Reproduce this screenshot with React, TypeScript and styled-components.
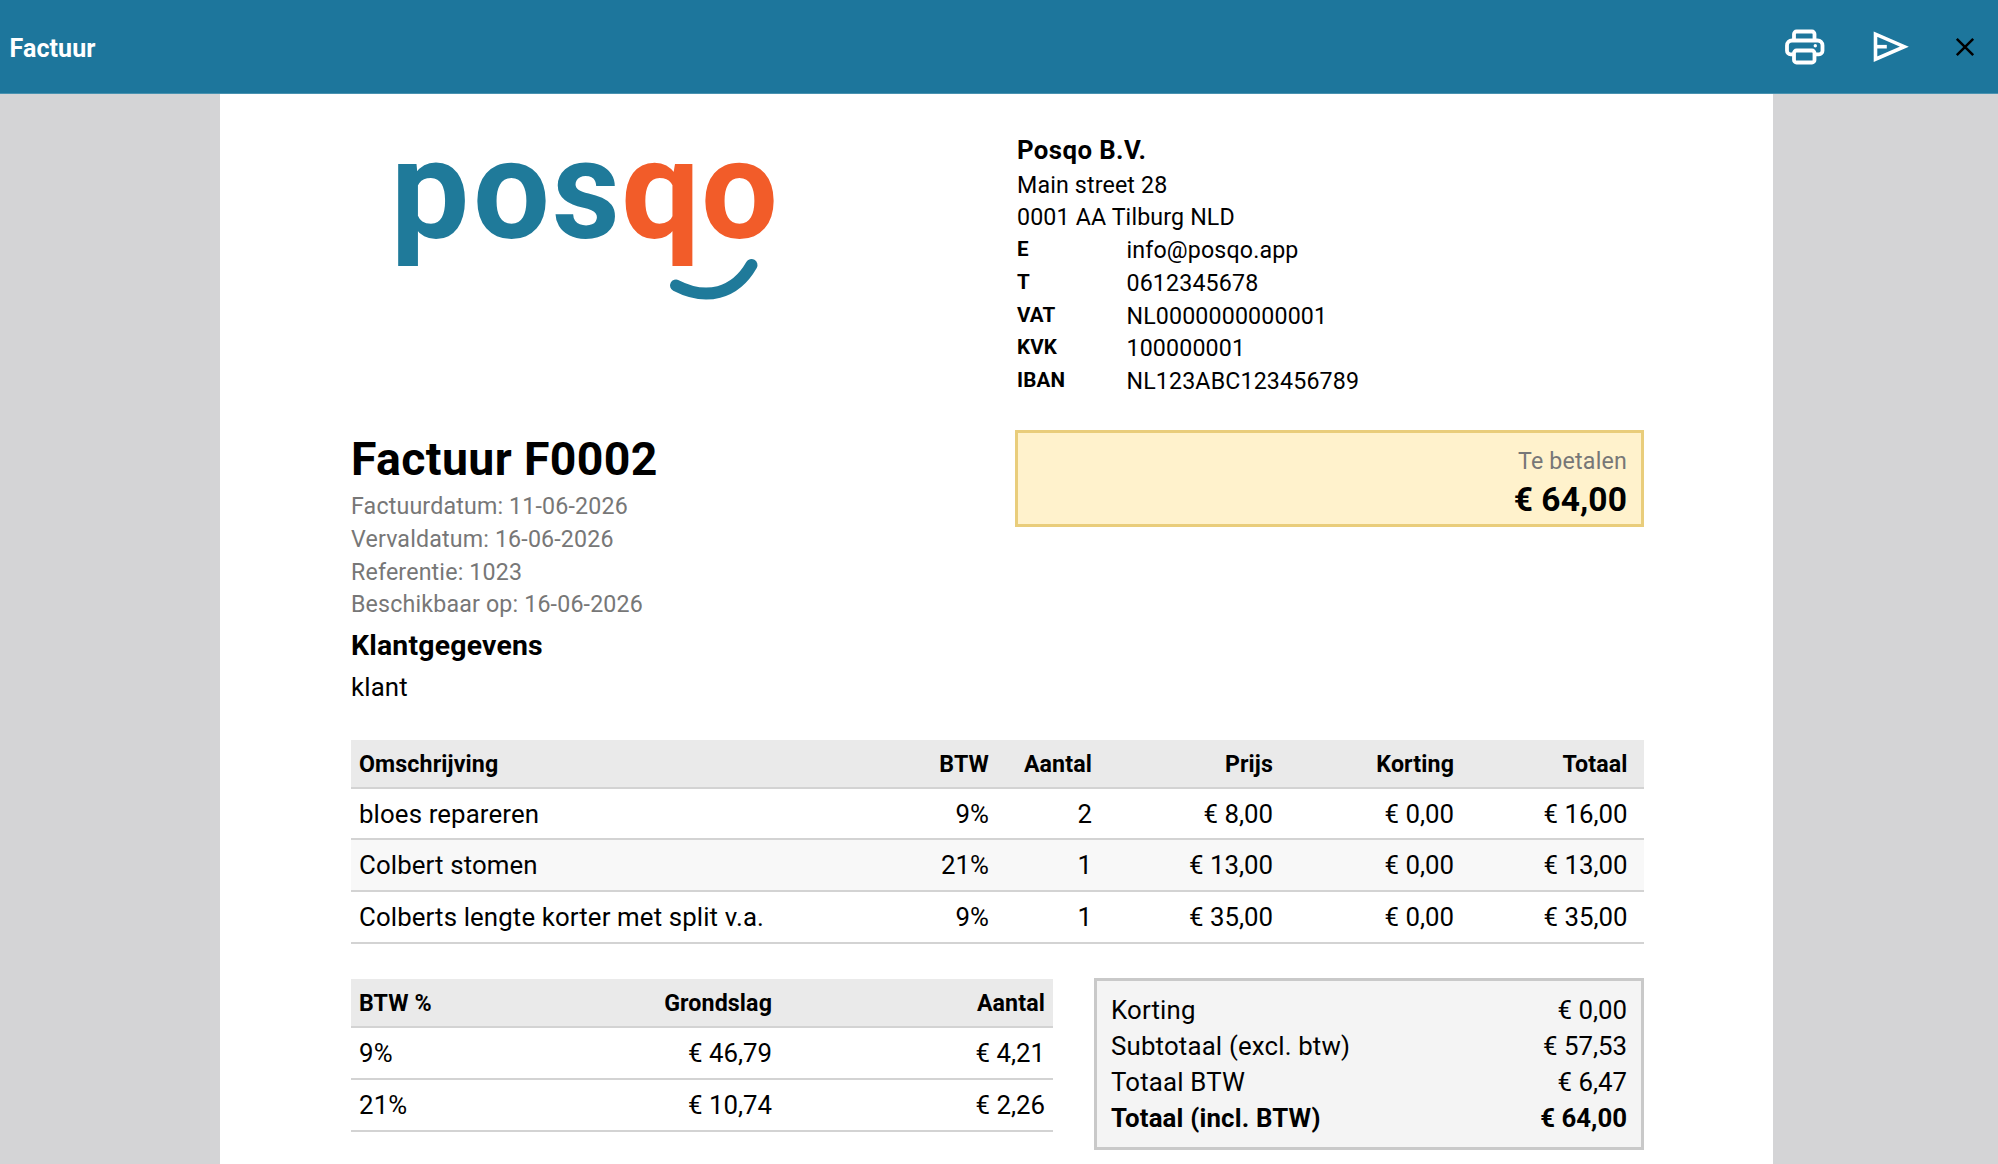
import React from "react";
import styled, { createGlobalStyle } from "styled-components";

const Global = createGlobalStyle`
  * { box-sizing: border-box; }
  html, body { margin: 0; padding: 0; height: 100%; overflow: hidden; }
  body { background: #d4d4d6; color: #000; font-family: Roboto, "Liberation Sans", sans-serif; }
`;

const Screen = styled.div`
  width: 1998px;
  height: 1164px;
  display: flex;
  flex-direction: column;
  align-items: stretch;
  overflow: hidden;
`;

const TopBar = styled.header`
  flex: none;
  height: 94px;
  display: flex;
  align-items: center;
  justify-content: space-between;
  padding: 0 19px 0 9.5px;
  background: #1d769c;
  border-bottom: 1px solid #4992b0;
`;

const Title = styled.h1`
  margin: 5px 0 0;
  color: #fff;
  font-size: 25px;
  line-height: 32px;
  font-weight: 700;
  letter-spacing: 0.1px;
`;

const Actions = styled.div`
  display: flex;
  align-items: center;
  gap: 36px;
`;

const IconButton = styled.button`
  display: flex;
  padding: 0;
  border: 0;
  background: none;
`;

const Page = styled.main`
  flex: 1;
  width: 1553px;
  margin-left: 220px;
  padding: 0 129px 0 131px;
  background: #fff;
`;

const Columns = styled.div<{ $height: number }>`
  display: grid;
  grid-template-columns: 664px 1fr;
  height: ${(p) => p.$height}px;
`;

const LogoBox = styled.div`
  padding: 6px 0 0 37px;
`;

const Company = styled.div`
  padding: 39px 0 0 2px;
  font-size: 23.2px;
  line-height: 32.8px;
  letter-spacing: 0.15px;
`;

const CompanyName = styled.div`
  font-size: 25.8px;
  font-weight: 700;
  line-height: 34.5px;
  letter-spacing: 0.4px;
  padding-bottom: 1px;
`;

const Contact = styled.div`
  display: grid;
  grid-template-columns: 109.5px 1fr;
`;

const ContactLabel = styled.span`
  font-size: 20.6px;
  font-weight: 700;
  line-height: 31px;
`;

const InvoiceTitle = styled.h2`
  margin: 0 0 2px;
  font-size: 46.4px;
  font-weight: 700;
  line-height: 58px;
  letter-spacing: 0.38px;
`;

const Meta = styled.div`
  color: #777;
  font-size: 23.2px;
  line-height: 32.75px;
  letter-spacing: 0.17px;
`;

const CustomerTitle = styled.h3`
  margin: 5px 0 0;
  font-size: 28.4px;
  font-weight: 700;
  line-height: 40px;
  letter-spacing: 0.2px;
`;

const Customer = styled.div`
  font-size: 25.8px;
  line-height: 42px;
  letter-spacing: 0.15px;
`;

const DueBox = styled.div`
  height: 97px;
  padding: 12px 14px 0 0;
  border: 3px solid #e9cd7b;
  background: #fff2cc;
  text-align: right;
`;

const DueLabel = styled.div`
  color: #777;
  font-size: 23.2px;
  line-height: 33px;
  letter-spacing: 0.2px;
`;

const DueAmount = styled.div`
  font-size: 33.5px;
  font-weight: 700;
  line-height: 44px;
  letter-spacing: 0.1px;
`;

const Table = styled.div<{ $cols: string; $top?: number }>`
  display: grid;
  grid-template-columns: ${(p) => p.$cols};
  margin-top: ${(p) => p.$top ?? 0}px;
`;

const HeadCell = styled.div<{ $left?: boolean; $wide?: boolean }>`
  height: 49px;
  padding: 0 ${(p) => (p.$wide ? 16.5 : 8)}px 0 8px;
  background: #eaeaea;
  border-bottom: 2px solid #d3d3d3;
  font-size: 23.2px;
  font-weight: 700;
  line-height: 48px;
  letter-spacing: 0.12px;
  text-align: ${(p) => (p.$left ? "left" : "right")};
`;

const Cell = styled.div<{ $left?: boolean; $wide?: boolean; $striped?: boolean; $height: number }>`
  height: ${(p) => p.$height}px;
  padding: 0 ${(p) => (p.$wide ? 16.5 : 8)}px 0 8px;
  background: ${(p) => (p.$striped ? "#f8f8f8" : "#fff")};
  border-bottom: 2px solid #d3d3d3;
  font-size: 25.8px;
  line-height: 50px;
  letter-spacing: ${(p) => (p.$left ? "0.13px" : "0")};
  text-align: ${(p) => (p.$left ? "left" : "right")};
  white-space: nowrap;
`;

const Summary = styled.div`
  display: grid;
  grid-template-columns: 702px 550px;
  justify-content: space-between;
  align-items: start;
  margin-top: 34px;
`;

const Totals = styled.div`
  height: 172px;
  padding: 12px 14px 0 14px;
  border: 3px solid #c9c9c9;
  background: #f4f4f4;
`;

const TotalRow = styled.div<{ $bold?: boolean }>`
  display: flex;
  justify-content: space-between;
  font-size: 25.8px;
  line-height: 35.9px;
  font-weight: ${(p) => (p.$bold ? 700 : 400)};
`;

const TotalLabel = styled.span`
  letter-spacing: 0.18px;
`;

const contacts = [
  ["E", "info@posqo.app"],
  ["T", "0612345678"],
  ["VAT", "NL0000000000001"],
  ["KVK", "100000001"],
  ["IBAN", "NL123ABC123456789"],
];

const meta = [
  "Factuurdatum: 11-06-2026",
  "Vervaldatum: 16-06-2026",
  "Referentie: 1023",
  "Beschikbaar op: 16-06-2026",
];

const lineHead = ["Omschrijving", "BTW", "Aantal", "Prijs", "Korting", "Totaal"];
const lines = [
  ["bloes repareren", "9%", "2", "€ 8,00", "€ 0,00", "€ 16,00"],
  ["Colbert stomen", "21%", "1", "€ 13,00", "€ 0,00", "€ 13,00"],
  ["Colberts lengte korter met split v.a.", "9%", "1", "€ 35,00", "€ 0,00", "€ 35,00"],
];
const lineHeights = [51, 52, 52];

const vatHead = ["BTW %", "Grondslag", "Aantal"];
const vat = [
  ["9%", "€ 46,79", "€ 4,21"],
  ["21%", "€ 10,74", "€ 2,26"],
];

const totals = [
  ["Korting", "€ 0,00"],
  ["Subtotaal (excl. btw)", "€ 57,53"],
  ["Totaal BTW", "€ 6,47"],
  ["Totaal (incl. BTW)", "€ 64,00"],
];

const PrintIcon = () => (
  <svg width="50" height="50" viewBox="0 1 50 50" fill="none" stroke="#fff" strokeWidth="3.8" strokeLinejoin="round">
    <path d="M15 18.500V13a2.500 2.500 0 0 1 2.500-2.500H33a2.500 2.500 0 0 1 2.500 2.500V18.500" />
    <path d="M15 33.300H11.500a3.500 3.500 0 0 1-3.500-3.500V24.500a5 5 0 0 1 5-5H38.500a5 5 0 0 1 5 5V29.800a3.500 3.500 0 0 1-3.500 3.500H35.500" />
    <rect x="15" y="29.500" width="20.500" height="12" rx="2.500" />
    <circle cx="36.300" cy="24.800" r="1.700" fill="#fff" stroke="none" />
  </svg>
);

const SendIcon = () => (
  <svg width="50" height="50" viewBox="0.7 0.3 50 50" fill="none" stroke="#fff" strokeWidth="3.6">
    <path d="M11.200 12.500V37.500L40 25Z" />
    <path d="M11.200 25H22.500" />
  </svg>
);

const CloseIcon = () => (
  <svg width="28" height="28" viewBox="0 0 28 28" fill="none" stroke="#000" strokeWidth="2.500">
    <path d="M5.800 5.800L22.200 22.200M22.200 5.800L5.800 22.200" />
  </svg>
);

const LogoText = styled.text`
  font-family: Roboto, "Liberation Sans", sans-serif;
  font-size: 139px;
  font-weight: 700;
`;

/* letter, left offset, horizontal stretch, colour */
const mark: [string, number, number, string][] = [
  ["p", 2.5, 1.01, "#1f7a9a"],
  ["o", 85, 0.98, "#1f7a9a"],
  ["s", 164, 0.95, "#1f7a9a"],
  ["q", 233, 1.01, "#f25c29"],
  ["o", 313, 0.98, "#f25c29"],
];

const Logo = () => (
  <svg width="400" height="220" viewBox="0 -50 400 220">
    {mark.map(([letter, x, stretch, color]) => (
      <LogoText key={x} fill={color} transform={`translate(${x} 88) scale(${stretch} 1)`}>
        {letter}
      </LogoText>
    ))}
    <path d="M288 135.500C318 151 347 144 363.500 115" fill="none" stroke="#1f7a9a" strokeWidth="12" strokeLinecap="round" />
  </svg>
);

export default function App() {
  return (
    <Screen>
      <Global />
      <TopBar>
        <Title>Factuur</Title>
        <Actions>
          <IconButton aria-label="Print"><PrintIcon /></IconButton>
          <IconButton aria-label="Send"><SendIcon /></IconButton>
          <IconButton aria-label="Close"><CloseIcon /></IconButton>
        </Actions>
      </TopBar>
      <Page>
        <Columns $height={336}>
          <LogoBox><Logo /></LogoBox>
          <Company>
            <CompanyName>Posqo B.V.</CompanyName>
            <div>Main street 28</div>
            <div>0001 AA Tilburg NLD</div>
            {contacts.map(([label, value]) => (
              <Contact key={label}>
                <ContactLabel>{label}</ContactLabel>
                <span>{value}</span>
              </Contact>
            ))}
          </Company>
        </Columns>
        <Columns $height={310}>
          <div>
            <InvoiceTitle>Factuur F0002</InvoiceTitle>
            {meta.map((m) => <Meta key={m}>{m}</Meta>)}
            <CustomerTitle>Klantgegevens</CustomerTitle>
            <Customer>klant</Customer>
          </div>
          <DueBox>
            <DueLabel>Te betalen</DueLabel>
            <DueAmount>€ 64,00</DueAmount>
          </DueBox>
        </Columns>
        <Table $cols="1fr 103px 103px 181px 181px 182px">
          {lineHead.map((h, i) => (
            <HeadCell key={h} $left={i === 0} $wide={i === 5}>{h}</HeadCell>
          ))}
          {lines.map((row, r) =>
            row.map((c, i) => (
              <Cell key={`${r}-${i}`} $left={i === 0} $wide={i === 5} $striped={r === 1} $height={lineHeights[r]}>{c}</Cell>
            ))
          )}
        </Table>
        <Summary>
          <Table $cols="195px 234px 1fr" $top={1}>
            {vatHead.map((h, i) => (
              <HeadCell key={h} $left={i === 0}>{h}</HeadCell>
            ))}
            {vat.map((row, r) =>
              row.map((c, i) => (
                <Cell key={`${r}-${i}`} $left={i === 0} $height={52}>{c}</Cell>
              ))
            )}
          </Table>
          <Totals>
            {totals.map(([label, value], i) => (
              <TotalRow key={label} $bold={i === 3}>
                <TotalLabel>{label}</TotalLabel>
                <span>{value}</span>
              </TotalRow>
            ))}
          </Totals>
        </Summary>
      </Page>
    </Screen>
  );
}
